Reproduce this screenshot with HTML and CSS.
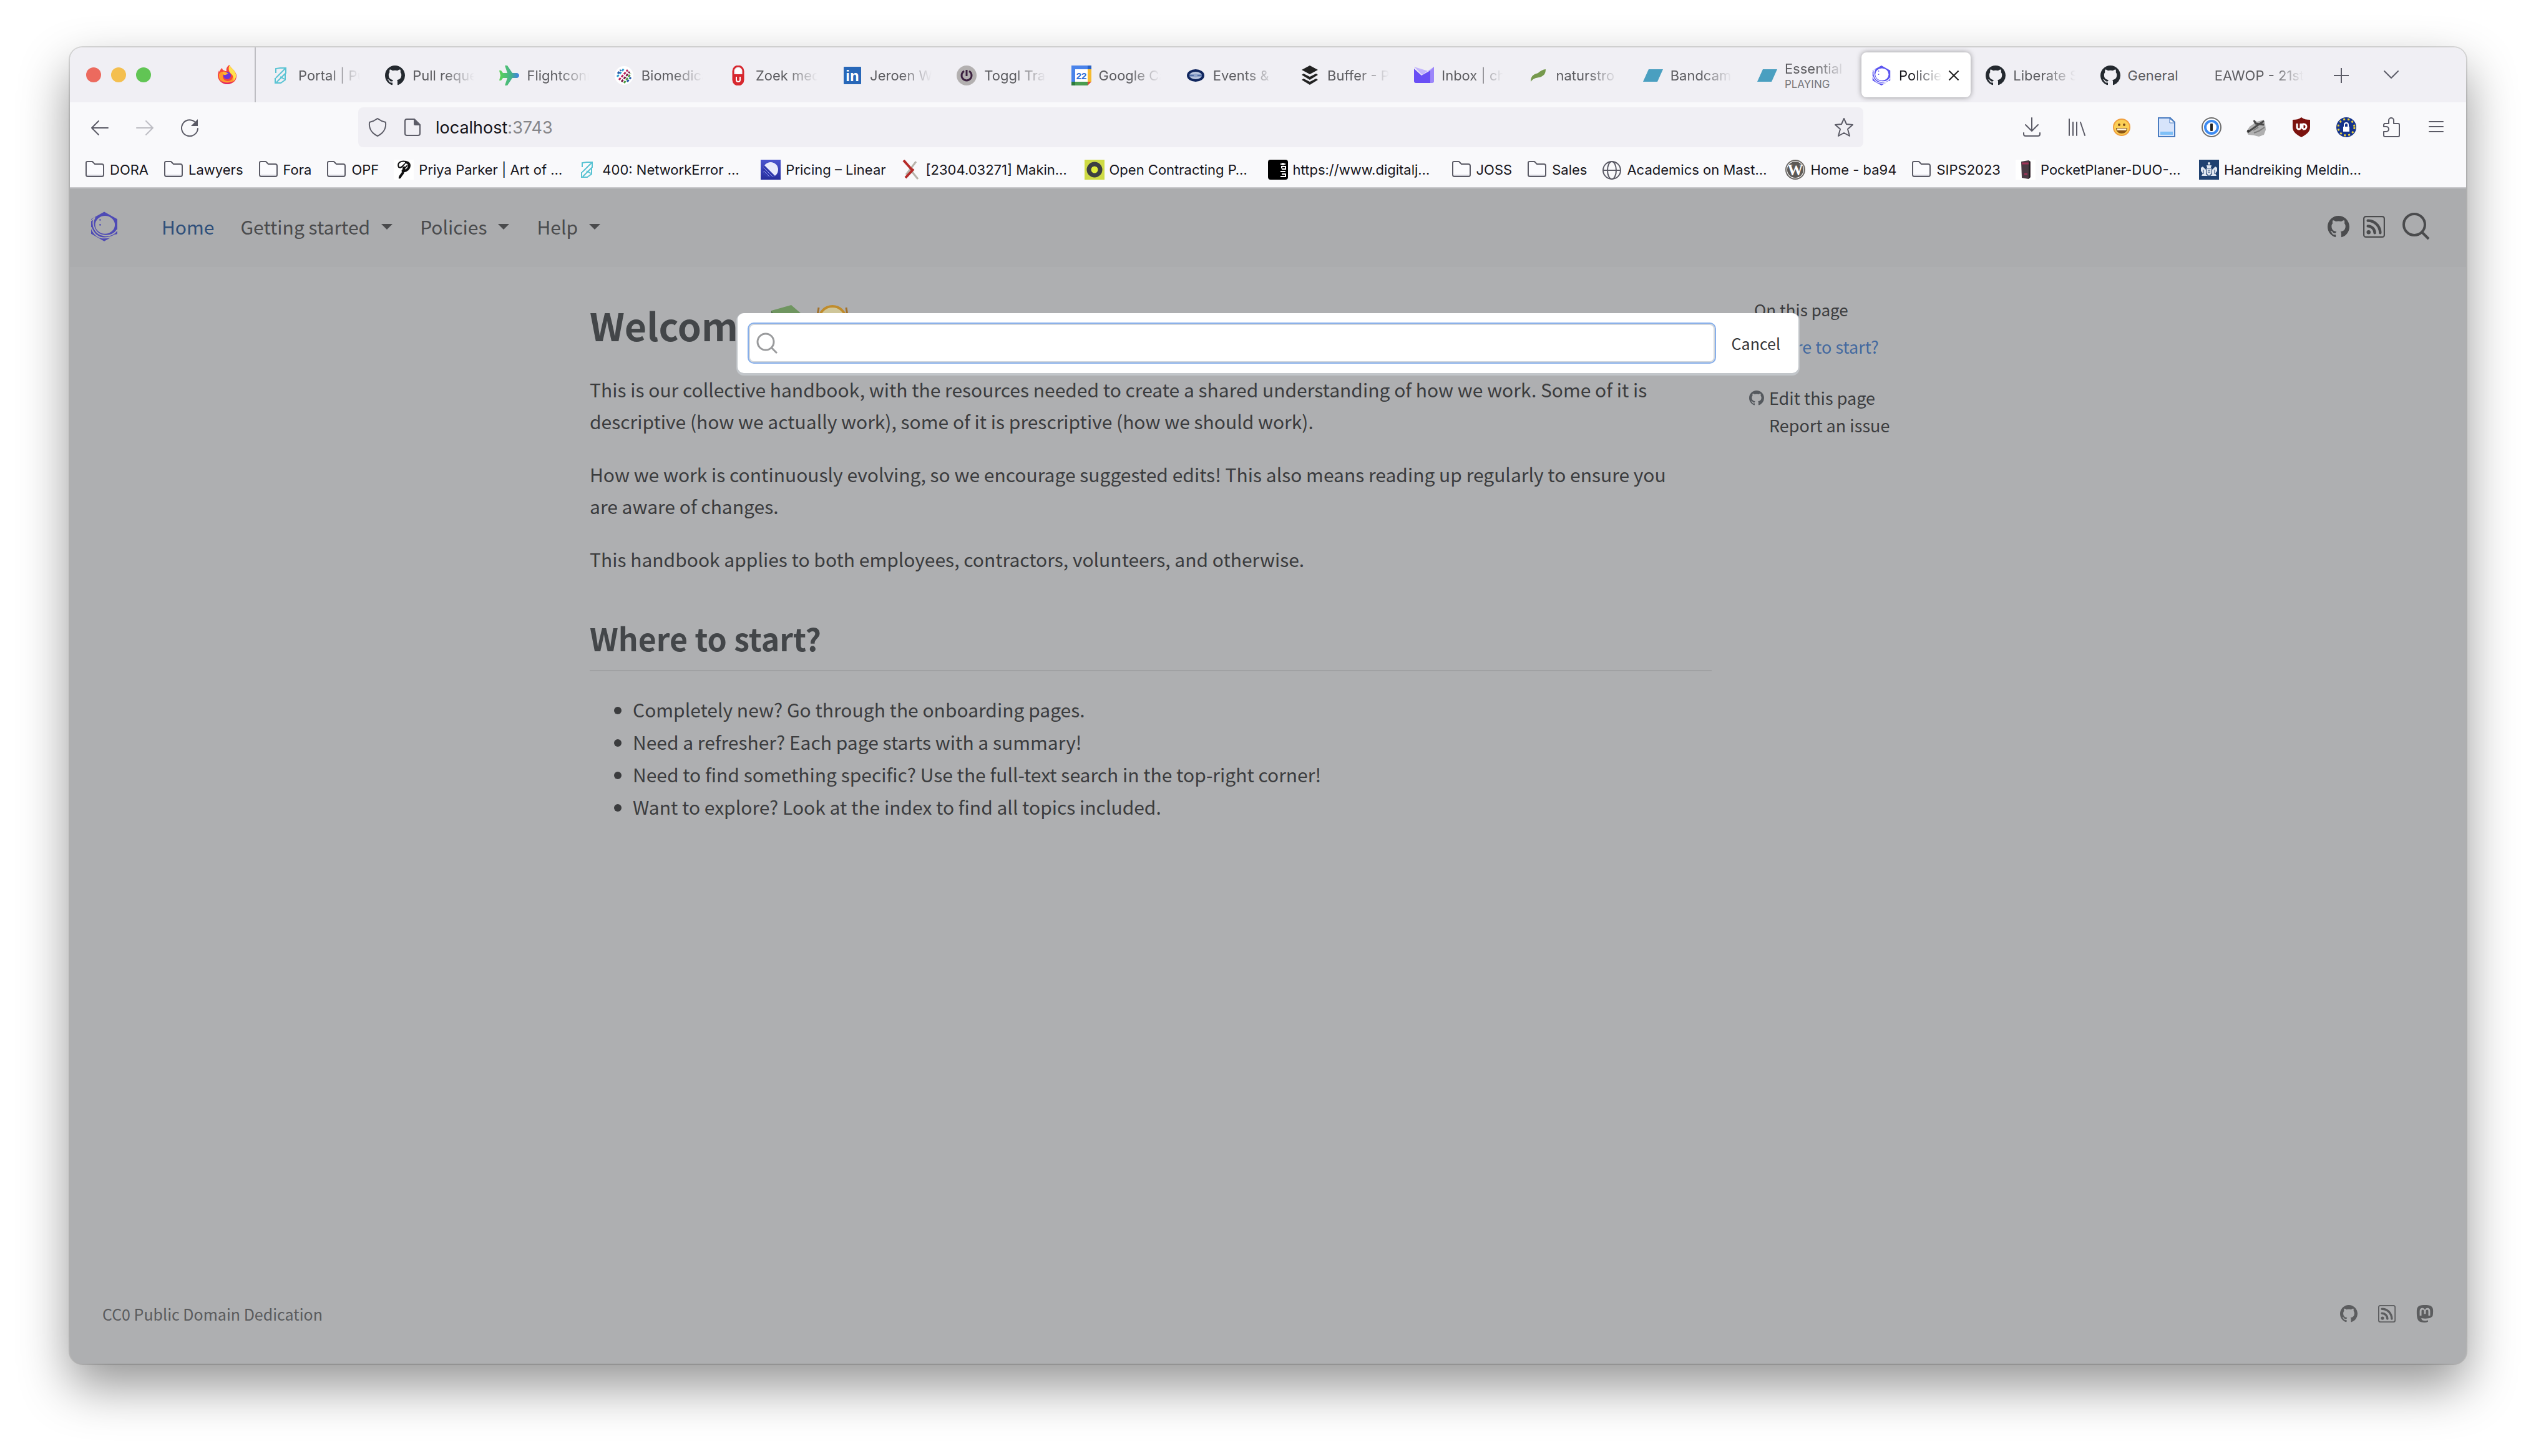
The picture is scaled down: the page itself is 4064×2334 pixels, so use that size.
FILE: index.html
```html
<!DOCTYPE html>
<html lang="en">
<head>
<meta charset="utf-8">
<title>Policies</title>
<link rel="stylesheet" href="styles.css">
</head>
<body>
<svg class="sprite" aria-hidden="true">
  <symbol id="firefox" viewBox="0 0 32 32">
    <path fill="#f5443f" d="M16 31C8 31 1 25 1 17c0-3 1-6 2-8 0 1 1 2 1 2 0-2 2-5 4-6 0 2 1 3 3 4 2 1 3 1 4 1-1-4 1-8 5-10 1 4 4 5 7 9 2 3 4 5 4 9 0 8-7 13-15 13z"/>
    <path fill="#ff9a2b" d="M3 15c1-2 3-4 5-4 3 0 5 1 6 3-3 0-5 2-5 5 0 4 4 7 8 7 6 0 9-5 8-10 3 3 3 9-1 12-3 3-8 3-12 2C6 28 2 22 3 15z"/>
    <path fill="#ffe14d" d="M20 0c1 4 4 5 7 9 2 3 4 6 3 11-1 3-3 5-4 6 1-5 0-9-4-12-3-3-5-8-2-14z"/>
    <circle cx="16" cy="17" r="6" fill="#6b35d9"/>
    <path fill="#ffb52e" d="M9 11c3-1 6 1 9 3-2 0-3 2-5 2-2 1-5-2-4-5z"/>
    <path fill="#e0226a" d="M5 24c4 5 14 6 21 2-2 3-6 5-10 5-5 0-9-3-11-7z"/>
  </symbol>
  <symbol id="portal" viewBox="0 0 32 32">
    <g fill="none" stroke="#59c3d3" stroke-width="2"><path d="M8 12V5l7-1h9v8L9 27M24 4 8 20"/><path d="M23 13v10l-7 5H7v-8M22 22l-7-4"/></g>
  </symbol>
  <symbol id="github" viewBox="0 0 16 16">
    <path d="M8 0C3.58 0 0 3.58 0 8c0 3.54 2.29 6.53 5.47 7.59.4.07.55-.17.55-.38 0-.19-.01-.82-.01-1.49-2.01.37-2.53-.49-2.69-.94-.09-.23-.48-.94-.82-1.13-.28-.15-.68-.52-.01-.53.63-.01 1.08.58 1.23.82.72 1.21 1.87.87 2.33.66.07-.52.28-.87.51-1.07-1.78-.2-3.64-.89-3.64-3.95 0-.87.31-1.59.82-2.15-.08-.2-.36-1.02.08-2.12 0 0 .67-.21 2.2.82.64-.18 1.32-.27 2-.27.68 0 1.36.09 2 .27 1.53-1.04 2.2-.82 2.2-.82.44 1.1.16 1.92.08 2.12.51.56.82 1.27.82 2.15 0 3.07-1.87 3.75-3.65 3.95.29.25.54.73.54 1.48 0 1.07-.01 1.93-.01 2.2 0 .21.15.46.55.38A8.01 8.01 0 0 0 16 8c0-4.42-3.58-8-8-8z"/>
  </symbol>
  <linearGradient id="plane-fill"><stop offset="0" stop-color="#5bd455"/><stop offset=".6" stop-color="#44b08c"/><stop offset="1" stop-color="#3f7fe8"/></linearGradient>
  <symbol id="plane" viewBox="0 0 32 32">
    <path fill="url(#plane-fill)" d="M9 0h4l8 12h7c2 0 4 2 4 4s-2 4-4 4h-7l-8 12H9l4-12H6l-3 4H0l2-8-2-8h3l3 4h7z"/>
  </symbol>
  <symbol id="biomed" viewBox="0 0 32 32">
    <circle cx="16" cy="16" r="15" fill="#fff"/>
    <g fill="none" stroke-width="3" stroke-dasharray="4 2"><path stroke="#b9225b" d="M8 23 22 7"/><path stroke="#2f9bd0" d="M5 18 16 5"/><path stroke="#4c9b3f" d="M16 28 27 13"/><path stroke="#7a1745" d="M12 26 25 10"/><path stroke="#2458a8" d="M6 13l5-6M21 26l6-7"/></g>
  </symbol>
  <symbol id="zoek" viewBox="0 0 32 32">
    <rect x="8" y="1" width="16" height="30" rx="8" fill="none" stroke="#d7282f" stroke-width="3"/>
    <path fill="#d7282f" d="M8 14h16v10a8 8 0 0 1-16 0z"/><path fill="none" stroke="#fff" stroke-width="2" d="M13 18v5a3 3 0 0 0 6 0v-5"/><circle cx="16" cy="9" r="5" fill="#fff"/>
  </symbol>
  <symbol id="linkedin" viewBox="0 0 32 32">
    <rect x="2" y="2" width="28" height="28" rx="1" fill="#2867b8"/><text x="16" y="25" class="glyph" font-size="24" text-anchor="middle" fill="#fff">in</text>
  </symbol>
  <symbol id="toggl" viewBox="0 0 32 32">
    <circle cx="16" cy="16" r="16" fill="#b3b0b0"/><g fill="none" stroke="#3c2140" stroke-width="3"><path d="M12 9a8 8 0 1 0 8 0"/><path d="M16 7v10"/></g>
  </symbol>
  <symbol id="calendar" viewBox="0 0 32 32">
    <path fill="#4a83ea" d="M0 0h26v6H6v20H0z"/><path fill="#2a62c4" d="M26 0h6v6h-6z"/><path fill="#f5bb30" d="M26 6h6v20h-6z"/><path fill="#4a9c50" d="M0 26h26v6H0z"/><path fill="#2c7a3c" d="M0 26h6v6H0z"/><path fill="#e04b3c" d="M26 26h6l-6 6z"/><path fill="#fff" d="M6 6h20v20H6z"/><text x="16" y="22" class="glyph" font-size="15" text-anchor="middle" fill="#2f6fd6">22</text>
  </symbol>
  <symbol id="events" viewBox="0 0 32 32">
    <ellipse cx="16" cy="16" rx="12" ry="8" fill="#b9c6df" stroke="#10265e" stroke-width="4"/><path stroke="#5470a8" stroke-width="3" d="M6 16h20"/><circle cx="16" cy="16" r="3" fill="#8fa3cb"/>
  </symbol>
  <symbol id="buffer" viewBox="0 0 32 32">
    <path fill="#222" d="M16 0l13 7-13 7L3 7zM3 15l3-2 10 5 10-5 3 2-13 8zM3 23l3-2 10 5 10-5 3 2-13 8z"/>
  </symbol>
  <symbol id="inbox" viewBox="0 0 32 32">
    <path fill="#c3b5fb" d="M0 2l13 13L32 2v25h-6V10z"/><path fill="#6a4ff5" d="M0 5l12 11 14-8v20H3a3 3 0 0 1-3-3z"/><path fill="#9c86fa" d="M32 2v23a3 3 0 0 1-3 3h-3V8z"/>
  </symbol>
  <symbol id="leaf" viewBox="0 0 32 32">
    <path fill="#76994d" d="M4 26c0-8 3-11 9-13 5-1 6-6 15-7 0 7-3 11-10 13-6 1-9 1-14 7z"/>
  </symbol>
  <symbol id="bandcamp" viewBox="0 0 32 32"><path fill="#4a9fc0" d="M9 6h23l-9 20H0z"/></symbol>
  <symbol id="hexring" viewBox="0 0 32 36">
    <path fill="currentColor" fill-rule="evenodd" d="M16 0 32 9v18L16 36 0 27V9zM17 5A12 11 0 0 0 17 27 12 11 0 0 0 17 5z"/>
    <g fill="none" class="hex-gap" stroke-width="1.500"><path d="M4 8c-4 8 1 20 12 21 7 1 13-2 16-7"/><path d="M0 19c3 8 8 13 16 13 6 0 10-1 14-4"/><path d="M0 11 5 7"/></g>
    <circle cx="11" cy="10" r="1" fill="currentColor"/><circle cx="11" cy="16" r="1" fill="currentColor"/>
  </symbol>
  <symbol id="close" viewBox="0 0 32 32"><path fill="none" stroke="#222" stroke-width="3" d="M5 5l22 22M27 5 5 27"/></symbol>
  <symbol id="plus" viewBox="0 0 32 32"><path fill="none" stroke="#5b5b66" stroke-width="2" d="M4 17h24M16 5v24"/></symbol>
  <symbol id="chevron" viewBox="0 0 32 32"><path fill="none" stroke="#5b5b66" stroke-width="2" stroke-linecap="round" stroke-linejoin="round" d="M5 10l11 11 11-11"/></symbol>
  <symbol id="back" viewBox="0 0 32 32"><path fill="none" stroke="currentColor" stroke-width="2" stroke-linecap="round" stroke-linejoin="round" d="M29 17H3M14 6 3 17l11 11"/></symbol>
  <symbol id="reload" viewBox="0 0 32 32"><path fill="none" stroke="#5b5b66" stroke-width="2" stroke-linecap="round" d="M29 18A13 13 0 1 1 24 7"/><path fill="#5b5b66" d="M29 3v11H18z"/></symbol>
  <symbol id="shield" viewBox="0 0 32 32"><path fill="none" stroke="#5b5b66" stroke-width="2" stroke-linejoin="round" d="M16 2c4 3 8 5 13 6 1 10-4 18-13 22C7 26 2 18 3 8c5-1 9-3 13-6z"/></symbol>
  <symbol id="page" viewBox="0 0 32 32"><path fill="none" stroke="#5b5b66" stroke-width="2" stroke-linejoin="round" d="M7 3h12l9 9v14a3 3 0 0 1-3 3H7a3 3 0 0 1-3-3V6a3 3 0 0 1 3-3z"/><path fill="#5b5b66" d="M18 3l10 10H20a2 2 0 0 1-2-2z"/></symbol>
  <symbol id="star" viewBox="0 0 32 32"><path fill="none" stroke="#5b5b66" stroke-width="2" stroke-linejoin="round" d="M16 2l4 9 10 1-8 7 3 11-9-5-9 5 3-11-8-7 10-1z"/></symbol>
  <symbol id="download" viewBox="0 0 32 32"><path fill="none" stroke="#5b5b66" stroke-width="2" stroke-linecap="round" stroke-linejoin="round" d="M16 1v20M6 12l10 10 10-10M3 25v2a3 3 0 0 0 3 3h20a3 3 0 0 0 3-3v-2"/></symbol>
  <symbol id="library" viewBox="0 0 32 32"><path fill="none" stroke="#5b5b66" stroke-width="2" stroke-linecap="round" d="M4 3v26M10 8v21M16 8v21M22 8l7 21"/></symbol>
  <symbol id="grin" viewBox="0 0 32 32"><circle cx="16" cy="16" r="13" fill="#fbcf55" stroke="#f0a040" stroke-width="2"/><path fill="#8a5415" d="M7 17h18c0 6-4 9-9 9s-9-3-9-9z"/><path fill="#fff5d8" d="M8 18h16l-1 3H9z"/><circle cx="12" cy="12" r="2" fill="#7c4d18"/><circle cx="20" cy="12" r="2" fill="#7c4d18"/></symbol>
  <symbol id="doc" viewBox="0 0 32 32"><path fill="#d7e4fb" stroke="#4a7cc0" stroke-width="2" d="M3 1h19l7 7v23H3z"/><path fill="#fff" stroke="#4a7cc0" d="M21 2v7h8z"/><path fill="#7fc0f7" d="M6 23h20v5H6z"/></symbol>
  <symbol id="onepass" viewBox="0 0 32 32"><circle cx="16" cy="16" r="15" fill="#fff" stroke="#6d6d6d" stroke-width="2"/><circle cx="16" cy="16" r="10" fill="#fff" stroke="#3d8bf2" stroke-width="4"/><rect x="14" y="10" width="4" height="12" rx="1" fill="#222"/></symbol>
  <symbol id="badger" viewBox="0 0 32 32"><path fill="#b0b0b0" d="M0 23l5-8 7-5-1-6 6 3 11-3 2 7 1 9-3 8-8 3-8-2-9-1z"/><path fill="none" stroke="#4a4a4a" stroke-width="3" d="M2 24l14-10 12-8M12 5l3 5 13 2"/><path stroke="#7d7d7d" stroke-width="2" fill="none" d="M12 25l8-3 9-6M11 21l8-5"/><circle cx="3" cy="22" r="2" fill="#333"/></symbol>
  <symbol id="ublock" viewBox="0 0 32 32"><path fill="#7b120e" d="M16 0c4 3 8 4 14 4v12c0 8-7 12-14 16C9 28 2 24 2 16V4c6 0 10-1 14-4z"/><path fill="none" stroke="#fff" stroke-width="3" d="M9 10v6a3 3 0 0 0 6 0v-6M18 10v9M18 11h2a4 4 0 0 1 0 8h-2"/></symbol>
  <symbol id="eulock" viewBox="0 0 32 32"><circle cx="16" cy="16" r="16" fill="#15348c"/><circle cx="16" cy="16" r="13" fill="none" stroke="#e8cf3c" stroke-width="3" stroke-dasharray="3 4"/><rect x="11" y="15" width="10" height="8" fill="#fff"/><path fill="none" stroke="#fff" stroke-width="2" d="M13 15v-3a3 3 0 0 1 6 0v3"/></symbol>
  <symbol id="puzzle" viewBox="0 0 32 32"><path fill="none" stroke="#5b5b66" stroke-width="2" stroke-linejoin="round" d="M5 10h7V5a4 4 0 0 1 8 0v5h7a2 2 0 0 1 2 2v17a2 2 0 0 1-2 2H6a2 2 0 0 1-2-2v-6h4a4 4 0 0 0 0-8H4v-3z"/></symbol>
  <symbol id="menu" viewBox="0 0 32 32"><path stroke="#5b5b66" stroke-width="2" stroke-linecap="round" d="M5 7h22M5 15h22M5 23h22"/></symbol>
  <symbol id="folder" viewBox="0 0 32 32"><path fill="#fbfbfe" stroke="#5b5b66" stroke-width="2" stroke-linejoin="round" d="M4 3h8l4 4h11a3 3 0 0 1 3 3v14a3 3 0 0 1-3 3H5a3 3 0 0 1-3-3V5a2 2 0 0 1 2-2z"/><path stroke="#c9c9d2" stroke-width="2" d="M4 25h24"/></symbol>
  <symbol id="priya" viewBox="0 0 32 32"><rect width="32" height="32" fill="#fff"/><path fill="none" stroke="#111" stroke-width="4" d="M10 30c-2-5 8-6 6-19M18 4c7 0 8 5 6 9-2 4-7 6-11 5"/><path stroke="#111" stroke-width="2" fill="none" d="M20 3C11 1 5 5 8 12c3 2 6-1 10-6M13 18l9-9"/></symbol>
  <linearGradient id="linear-fill" x2="0" y2="1"><stop offset="0" stop-color="#4b55cf"/><stop offset="1" stop-color="#262d9c"/></linearGradient>
  <symbol id="linear" viewBox="0 0 32 32"><rect width="32" height="32" fill="url(#linear-fill)"/><circle cx="16" cy="16" r="12" fill="#e8eafc"/><path fill="#3038ad" d="M6 9 23 26A12 12 0 0 1 4 18a12 12 0 0 1 2-9z"/><path stroke="#8f97e6" d="M5 13l14 14M5 18l9 9"/></symbol>
  <symbol id="arxiv" viewBox="0 0 32 32"><path stroke="#b9b3ab" stroke-width="3" d="M24 3 8 24M14 15l13 16"/><path fill="none" stroke="#b52a28" stroke-width="4" d="M4 1l15 17M20 15 7 29"/></symbol>
  <symbol id="ocp" viewBox="0 0 32 32"><rect width="32" height="32" fill="#cfdb45"/><circle cx="16" cy="16" r="9" fill="#e1ec3c" stroke="#3d3f42" stroke-width="7"/></symbol>
  <symbol id="djnl" viewBox="0 0 32 32"><rect width="32" height="32" rx="4" fill="#000"/><path fill="none" stroke="#fff" stroke-width="2" d="M20 27h8v-4h-6M20 19h8M22 15h6v-4h-6v3M20 7h8M24 5v4"/></symbol>
  <symbol id="globe" viewBox="0 0 32 32"><g fill="none" stroke="#5b5b66" stroke-width="2"><circle cx="16" cy="17" r="14"/><ellipse cx="16" cy="17" rx="7" ry="14"/><path d="M2 17h28"/></g></symbol>
  <symbol id="wordpress" viewBox="0 0 32 32"><circle cx="16" cy="16" r="15" fill="#fff" stroke="#6b6864" stroke-width="2"/><circle cx="16" cy="16" r="13" fill="#5d5a56"/><text x="16" y="25" class="glyph-serif" font-size="25" text-anchor="middle" fill="#fff">W</text></symbol>
  <symbol id="pocket" viewBox="0 0 32 32"><rect width="32" height="32" fill="#fff"/><path fill="#4b3b44" d="M9 3l12-2 3 2v25l-3 3-11-2z"/><path stroke="#a03357" stroke-width="3" d="M10 6h11M14 23h5"/><path stroke="#222" stroke-width="2" d="M22 3v26"/></symbol>
  <symbol id="rijk" viewBox="0 0 32 32"><rect width="32" height="32" fill="#1f4170"/><g fill="#dfe6f0"><circle cx="16" cy="6" r="2"/><path d="M12 9h8l-1 4h-6zM12 14h8v8l-4 4-4-4z"/><path d="M3 13l3-2 3 3 2 2v7l3 3H4l2-4-3-4zM29 13l-3-2-3 3-2 2v7l-3 3h10l-2-4 3-4z"/></g><path stroke="#1f4170" d="M14 17h4M14 20h4M7 16v7M25 16v7"/></symbol>
  <symbol id="rss" viewBox="0 0 16 16"><path d="M14 1a1 1 0 0 1 1 1v12a1 1 0 0 1-1 1H2a1 1 0 0 1-1-1V2a1 1 0 0 1 1-1h12zM2 0a2 2 0 0 0-2 2v12a2 2 0 0 0 2 2h12a2 2 0 0 0 2-2V2a2 2 0 0 0-2-2H2z"/><path d="M5.500 12a1.500 1.500 0 1 1-3 0 1.500 1.500 0 0 1 3 0zm-3-8.500a1 1 0 0 1 1-1c5.523 0 10 4.477 10 10a1 1 0 1 1-2 0 8 8 0 0 0-8-8 1 1 0 0 1-1-1zm0 4a1 1 0 0 1 1-1 6 6 0 0 1 6 6 1 1 0 1 1-2 0 4 4 0 0 0-4-4 1 1 0 0 1-1-1z"/></symbol>
  <symbol id="search" viewBox="0 0 44 44"><circle cx="19" cy="19" r="17" fill="none" stroke="currentColor" stroke-width="4"/><path fill="none" stroke="currentColor" stroke-width="4" d="M31 31l11 11"/></symbol>
  <symbol id="search-thin" viewBox="0 0 34 34"><path fill="none" stroke="currentColor" stroke-width="3" d="M24 24l9 9"/><circle cx="15" cy="15" r="13" fill="none" stroke="currentColor" stroke-width="3"/></symbol>
  <symbol id="mastodon" viewBox="0 0 16 16"><path d="M11.190 12.195c2.016-.24 3.770-1.475 3.990-2.603.348-1.778.32-4.339.32-4.339 0-3.470-2.286-4.488-2.286-4.488C12.062.238 10.083.017 8.027 0h-.05C5.920.017 3.942.238 2.790.765c0 0-2.285 1.017-2.285 4.488l-.002.662c-.004.64-.007 1.350.011 2.091.083 3.394.626 6.740 3.780 7.570 1.454.383 2.703.463 3.709.408 1.823-.1 2.847-.647 2.847-.647l-.06-1.317s-1.303.41-2.767.36c-1.450-.05-2.980-.156-3.215-1.928a3.614 3.614 0 0 1-.033-.496s1.424.346 3.228.428c1.103.05 2.137-.064 3.188-.189zm1.613-2.470H11.130v-4.080c0-.859-.364-1.295-1.091-1.295-.804 0-1.207.517-1.207 1.541v2.233H7.168V5.890c0-1.024-.403-1.541-1.207-1.541-.727 0-1.091.436-1.091 1.296v4.079H3.197V5.522c0-.859.22-1.541.66-2.046.456-.505 1.052-.764 1.793-.764.856 0 1.504.328 1.933.983L8 4.390l.417-.695c.429-.655 1.077-.983 1.934-.983.74 0 1.336.259 1.791.764.442.505.661 1.187.661 2.046v4.203z"/></symbol>
  <symbol id="book" viewBox="0 0 56 56"><path fill="#6f9560" d="M2 10 34 1 56 20 24 40z"/><path fill="#4c6e42" d="M2 10 24 40v8L2 18z"/></symbol>
  <symbol id="medal" viewBox="0 0 56 56"><ellipse cx="28" cy="23" rx="21" ry="20" fill="#cfc699" stroke="#c08c2c" stroke-width="4"/><path fill="none" stroke="#a1702a" stroke-width="3" d="M6 5 3 24M50 5l3 19"/></symbol>
</svg>

<div class="window">
  <header class="chrome">
    <div class="tabstrip">
      <div class="lights"><span class="light red"></span><span class="light yellow"></span><span class="light green"></span></div>
      <button class="pinned" aria-label="Firefox"><svg class="i32"><use href="#firefox"/></svg></button>
      <div class="tabs" role="tablist">
        <button class="tab" role="tab"><svg class="i32"><use href="#portal"/></svg><span class="label fade">Portal | Pu</span></button>
        <button class="tab" role="tab"><svg class="i32 gh"><use href="#github"/></svg><span class="label fade">Pull reque</span></button>
        <button class="tab" role="tab"><svg class="i32"><use href="#plane"/></svg><span class="label fade">Flightconn</span></button>
        <button class="tab" role="tab"><svg class="i32"><use href="#biomed"/></svg><span class="label fade">Biomedica</span></button>
        <button class="tab" role="tab"><svg class="i32"><use href="#zoek"/></svg><span class="label fade">Zoek med</span></button>
        <button class="tab" role="tab"><svg class="i32"><use href="#linkedin"/></svg><span class="label fade">Jeroen Wi</span></button>
        <button class="tab" role="tab"><svg class="i32"><use href="#toggl"/></svg><span class="label fade">Toggl Trac</span></button>
        <button class="tab" role="tab"><svg class="i32"><use href="#calendar"/></svg><span class="label fade">Google Ca</span></button>
        <button class="tab" role="tab"><svg class="i32"><use href="#events"/></svg><span class="label fade">Events &amp;</span></button>
        <button class="tab" role="tab"><svg class="i32"><use href="#buffer"/></svg><span class="label fade">Buffer - P</span></button>
        <button class="tab" role="tab"><svg class="i32"><use href="#inbox"/></svg><span class="label fade">Inbox | ch</span></button>
        <button class="tab" role="tab"><svg class="i32"><use href="#leaf"/></svg><span class="label fade">naturstro</span></button>
        <button class="tab" role="tab"><svg class="i32"><use href="#bandcamp"/></svg><span class="label fade">Bandcam</span></button>
        <button class="tab" role="tab"><svg class="i32"><use href="#bandcamp"/></svg><span class="label two-line"><span class="fade">Essential</span><small>PLAYING</small></span></button>
        <button class="tab active" role="tab" aria-selected="true"><svg class="i32 hex"><use href="#hexring"/></svg><span class="label fade">Policie</span><svg class="x"><use href="#close"/></svg></button>
        <button class="tab" role="tab"><svg class="i32 gh"><use href="#github"/></svg><span class="label fade">Liberate S</span></button>
        <button class="tab" role="tab"><svg class="i32 gh"><use href="#github"/></svg><span class="label">General</span></button>
        <button class="tab" role="tab"><span class="label fade">EAWOP - 21st</span></button>
      </div>
      <button class="strip-button" aria-label="New tab"><svg class="i32"><use href="#plus"/></svg></button>
      <button class="strip-button last" aria-label="List all tabs"><svg class="i32"><use href="#chevron"/></svg></button>
    </div>

    <div class="toolbar">
      <button class="tool" aria-label="Back"><svg class="i32"><use href="#back"/></svg></button>
      <button class="tool forward" aria-label="Forward" disabled><svg class="i32"><use href="#back"/></svg></button>
      <button class="tool" aria-label="Reload"><svg class="i32"><use href="#reload"/></svg></button>
      <div class="urlbar">
        <svg class="i32"><use href="#shield"/></svg>
        <svg class="i32"><use href="#page"/></svg>
        <a class="url" href="#">localhost<span>:3743</span></a>
        <svg class="i32"><use href="#star"/></svg>
      </div>
      <button class="tool" aria-label="Downloads"><svg class="i32"><use href="#download"/></svg></button>
      <button class="tool" aria-label="Library"><svg class="i32"><use href="#library"/></svg></button>
      <button class="tool" aria-label="Emoji"><svg class="i32"><use href="#grin"/></svg></button>
      <button class="tool" aria-label="Notes"><svg class="i32"><use href="#doc"/></svg></button>
      <button class="tool" aria-label="Passwords"><svg class="i32"><use href="#onepass"/></svg></button>
      <button class="tool" aria-label="Privacy Badger"><svg class="i32"><use href="#badger"/></svg></button>
      <button class="tool" aria-label="uBlock"><svg class="i32"><use href="#ublock"/></svg></button>
      <button class="tool" aria-label="Consent"><svg class="i32"><use href="#eulock"/></svg></button>
      <button class="tool" aria-label="Extensions"><svg class="i32"><use href="#puzzle"/></svg></button>
      <button class="tool" aria-label="Menu"><svg class="i32"><use href="#menu"/></svg></button>
    </div>

    <nav class="bookmarks" aria-label="Bookmarks">
      <a href="#"><svg class="i32"><use href="#folder"/></svg>DORA</a>
      <a href="#"><svg class="i32"><use href="#folder"/></svg>Lawyers</a>
      <a href="#"><svg class="i32"><use href="#folder"/></svg>Fora</a>
      <a href="#"><svg class="i32"><use href="#folder"/></svg>OPF</a>
      <a href="#" class="long"><svg class="i32"><use href="#priya"/></svg>Priya Parker | Art of …</a>
      <a href="#" class="long"><svg class="i32"><use href="#portal"/></svg>400: NetworkError …</a>
      <a href="#"><svg class="i32"><use href="#linear"/></svg>Pricing – Linear</a>
      <a href="#" class="long"><svg class="i32"><use href="#arxiv"/></svg>[2304.03271] Makin…</a>
      <a href="#" class="long"><svg class="i32"><use href="#ocp"/></svg>Open Contracting P…</a>
      <a href="#" class="long"><svg class="i32"><use href="#djnl"/></svg>https://www.digitalj…</a>
      <a href="#"><svg class="i32"><use href="#folder"/></svg>JOSS</a>
      <a href="#"><svg class="i32"><use href="#folder"/></svg>Sales</a>
      <a href="#" class="long"><svg class="i32"><use href="#globe"/></svg>Academics on Mast…</a>
      <a href="#"><svg class="i32"><use href="#wordpress"/></svg>Home - ba94</a>
      <a href="#"><svg class="i32"><use href="#folder"/></svg>SIPS2023</a>
      <a href="#" class="long"><svg class="i32"><use href="#pocket"/></svg>PocketPlaner-DUO-…</a>
      <a href="#" class="long"><svg class="i32"><use href="#rijk"/></svg>Handreiking Meldin…</a>
    </nav>
  </header>

  <div class="site">
    <nav class="navbar" aria-label="Site">
      <a href="#" class="brand" aria-label="Handbook"><svg><use href="#hexring"/></svg></a>
      <a href="#" class="current">Home</a>
      <button class="drop">Getting started</button>
      <button class="drop">Policies</button>
      <button class="drop">Help</button>
      <div class="nav-icons">
        <a href="#" aria-label="GitHub"><svg><use href="#github"/></svg></a>
        <a href="#" aria-label="RSS"><svg><use href="#rss"/></svg></a>
        <button class="find" aria-label="Search"><svg><use href="#search"/></svg></button>
      </div>
    </nav>

    <div class="content">
      <main>
        <h1>Welcome <svg><use href="#book"/></svg> <svg><use href="#medal"/></svg></h1>
        <p>This is our collective handbook, with the resources needed to create a shared understanding of how we work. Some of it is descriptive (how we actually work), some of it is prescriptive (how we should work).</p>
        <p>How we work is continuously evolving, so we encourage suggested edits! This also means reading up regularly to ensure you are aware of changes.</p>
        <p>This handbook applies to both employees, contractors, volunteers, and otherwise.</p>
        <h2>Where to start?</h2>
        <ul>
          <li>Completely new? Go through the onboarding pages.</li>
          <li>Need a refresher? Each page starts with a summary!</li>
          <li>Need to find something specific? Use the full-text search in the top-right corner!</li>
          <li>Want to explore? Look at the index to find all topics included.</li>
        </ul>
      </main>
      <aside>
        <div class="toc-title">On this page</div>
        <a href="#" class="toc-link">Where to start?</a>
        <a href="#" class="action"><svg><use href="#github"/></svg>Edit this page</a>
        <a href="#" class="action plain">Report an issue</a>
      </aside>
    </div>

    <footer>
      <span>CC0 Public Domain Dedication</span>
      <div class="foot-icons">
        <a href="#" aria-label="GitHub"><svg><use href="#github"/></svg></a>
        <a href="#" aria-label="RSS"><svg><use href="#rss"/></svg></a>
        <a href="#" aria-label="Mastodon"><svg><use href="#mastodon"/></svg></a>
      </div>
    </footer>

    <form class="search-box" role="search">
      <label class="field"><svg><use href="#search-thin"/></svg><input type="search" aria-label="Search"></label>
      <button type="button">Cancel</button>
    </form>
  </div>
</div>
</body>
</html>
```
FILE: styles.css
```css
* { box-sizing: border-box; }

body {
  margin: 0;
  min-height: 100vh;
  padding: 76px 112px 148px;
  display: flex;
  background: #fff;
  font-family: Inter, "Liberation Sans", sans-serif;
}

button {
  margin: 0;
  padding: 0;
  border: 0;
  background: none;
  font: inherit;
  color: inherit;
}

a { color: inherit; text-decoration: none; }
svg { display: block; flex: none; }
.sprite { position: absolute; width: 0; height: 0; }
.i32 { width: 32px; height: 32px; }
.glyph { font-family: "Liberation Sans", sans-serif; font-weight: 700; }
.glyph-serif { font-family: "Liberation Serif", serif; font-weight: 700; }

.window {
  flex: 1;
  min-width: 0;
  display: flex;
  flex-direction: column;
  border-radius: 20px;
  overflow: hidden;
  background: #aeafb1;
  box-shadow: 0 0 0 2px rgba(0, 0, 0, .13), 0 36px 80px rgba(0, 0, 0, .42);
}

/* Browser chrome */
.chrome { background: #f9f9fb; border-bottom: 2px solid #c9c9cc; color: #15141a; }
.tabstrip { display: flex; align-items: center; height: 88px; background: #f0eff4; }
.lights { display: flex; gap: 16px; padding-left: 26px; }
.light { width: 24px; height: 24px; border-radius: 50%; }
.red { background: #ec6a5e; }
.yellow { background: #f4bf4f; }
.green { background: #61c554; }
.pinned { display: flex; align-items: center; align-self: stretch; margin-left: 106px; padding-right: 28px; border-right: 2px solid #bdbdc2; }

.tabs { flex: 1; min-width: 0; display: grid; grid-template-columns: repeat(18, minmax(0, 1fr)); align-items: center; padding-left: 4px; }
.tab { display: flex; align-items: center; gap: 12px; height: 72px; margin: 0 4px; padding: 2px 16px 0; border-radius: 8px; font-size: 22px; line-height: 28px; color: #5c5c60; text-align: left; white-space: nowrap; }
.tab.active { background: #fff; color: #15141a; box-shadow: 0 0 8px rgba(0, 0, 0, .4); }
.label { flex: 1; min-width: 0; overflow: hidden; }
.fade { overflow: hidden; -webkit-mask-image: linear-gradient(to left, transparent, #000 50px); mask-image: linear-gradient(to left, transparent, #000 50px); }
.two-line { display: flex; flex-direction: column; }
.two-line small { font-size: 17px; line-height: 22px; color: #77777b; }
.gh { fill: #24292f; }
.hex { color: #5b55f0; }
.hex-gap { stroke: var(--gap, #fff); }
.active .label { margin-right: -4px; }
.tab .x { width: 22px; height: 22px; }
.strip-button { width: 80px; display: flex; justify-content: center; }
.strip-button.last { margin-right: 80px; }

.toolbar { display: flex; align-items: center; height: 80px; padding: 0 12px; }
.tool { width: 72px; height: 64px; display: flex; align-items: center; justify-content: center; color: #5b5b66; }
.forward { color: #bdbdc3; }
.forward svg { transform: scaleX(-1); }
.urlbar { flex: 1; height: 64px; margin: 0 234px; padding: 0 15px; display: flex; align-items: center; gap: 24px; border-radius: 8px; background: #f0eff4; }
.url { flex: 1; margin-left: -3px; padding-top: 2px; font-size: 27px; line-height: 32px; color: #15141a; }
.url span { color: #858589; }

.bookmarks { display: flex; align-items: center; gap: 24px; height: 56px; padding-left: 24px; font-size: 22px; line-height: 28px; white-space: nowrap; }
.bookmarks a { display: flex; align-items: center; gap: 8px; }
.bookmarks .long { width: 270px; }

/* Site, seen through the search overlay */
.site {
  position: relative;
  flex: 1;
  display: flex;
  flex-direction: column;
  font-family: "Noto Sans CJK SC", "Noto Sans", sans-serif;
  color: #3b3c3e;
}
.navbar { display: flex; align-items: center; height: 126px; padding: 0 58px 4px 34px; background: #abacae; font-size: 30px; line-height: 48px; color: #4a4b4d; }
.brand { --gap: #abacae; margin-right: 71px; color: #4f4bb5; }
.brand svg { width: 42px; height: 48px; }
.current { margin-right: 42px; color: #2f4f7a; }
.drop { display: flex; align-items: center; gap: 18px; margin-right: 44px; }
.drop::after { content: ""; border: 9px solid transparent; border-top-color: currentColor; border-bottom: 0; }
.nav-icons { margin-left: auto; display: flex; align-items: center; gap: 22px; fill: #4b4c4e; }
.nav-icons svg { width: 35px; height: 35px; }
.nav-icons .find { margin-left: 6px; }
.nav-icons .find svg { width: 44px; height: 44px; }

.content { width: 100%; max-width: 2174px; margin: 0 auto; padding-top: 52px; display: grid; grid-template-columns: minmax(0, 1fr) 316px; gap: 60px; }
h1, h2 { margin: 0; font-weight: 700; color: #434649; }
h1 { display: flex; align-items: flex-start; font-size: 61px; line-height: 82px; margin-bottom: 37px; }
h1 svg { width: 56px; height: 56px; margin: 8px 0 0 16px; }
p { margin: 0 0 34px; max-width: 1770px; font-size: 30px; line-height: 51px; }
h2 { margin: 66px 0 35px; padding-bottom: 18px; border-bottom: 2px solid #a0a1a3; font-size: 50px; line-height: 68px; }
ul { margin: 0; padding-left: 69px; font-size: 30px; line-height: 52px; }

aside { margin-top: -6px; font-size: 27px; line-height: 44px; }
.toc-title { margin-bottom: 16px; padding-left: 8px; font-size: 26px; }
.toc-link { display: block; padding-left: 20px; margin-bottom: 38px; color: #43699f; }
.action { display: flex; align-items: center; gap: 8px; }
.action svg { width: 24px; height: 24px; fill: #55595e; }
.plain { padding-left: 32px; }

footer { margin-top: auto; display: flex; align-items: center; justify-content: space-between; padding: 0 52px 60px; font-size: 25px; line-height: 40px; color: #5a5b5d; }
.foot-icons { display: flex; gap: 33px; fill: #5c5d5f; }
.foot-icons svg { width: 28px; height: 28px; }

.search-box {
  position: absolute;
  top: 200px;
  left: 0;
  right: 0;
  margin: 0 auto;
  width: 1700px;
  max-width: 100%;
  height: 96px;
  padding: 0 29px 0 16px;
  display: flex;
  align-items: center;
  gap: 25px;
  border-radius: 10px;
  background: #fff;
  box-shadow: 0 2px 0 2px #c2c6ca;
  font-size: 25px;
  line-height: 40px;
  color: #343538;
}
.field { flex: 1; height: 66px; display: flex; align-items: center; gap: 12px; padding: 0 12px; border: 2px solid #86aeea; border-radius: 10px; box-shadow: inset 0 0 0 2px #d3d7db; color: #9a9b9d; }
.field svg { width: 34px; height: 34px; }
.field input { flex: 1; height: 50px; border: 0; outline: 0; background: none; font: inherit; }
```
